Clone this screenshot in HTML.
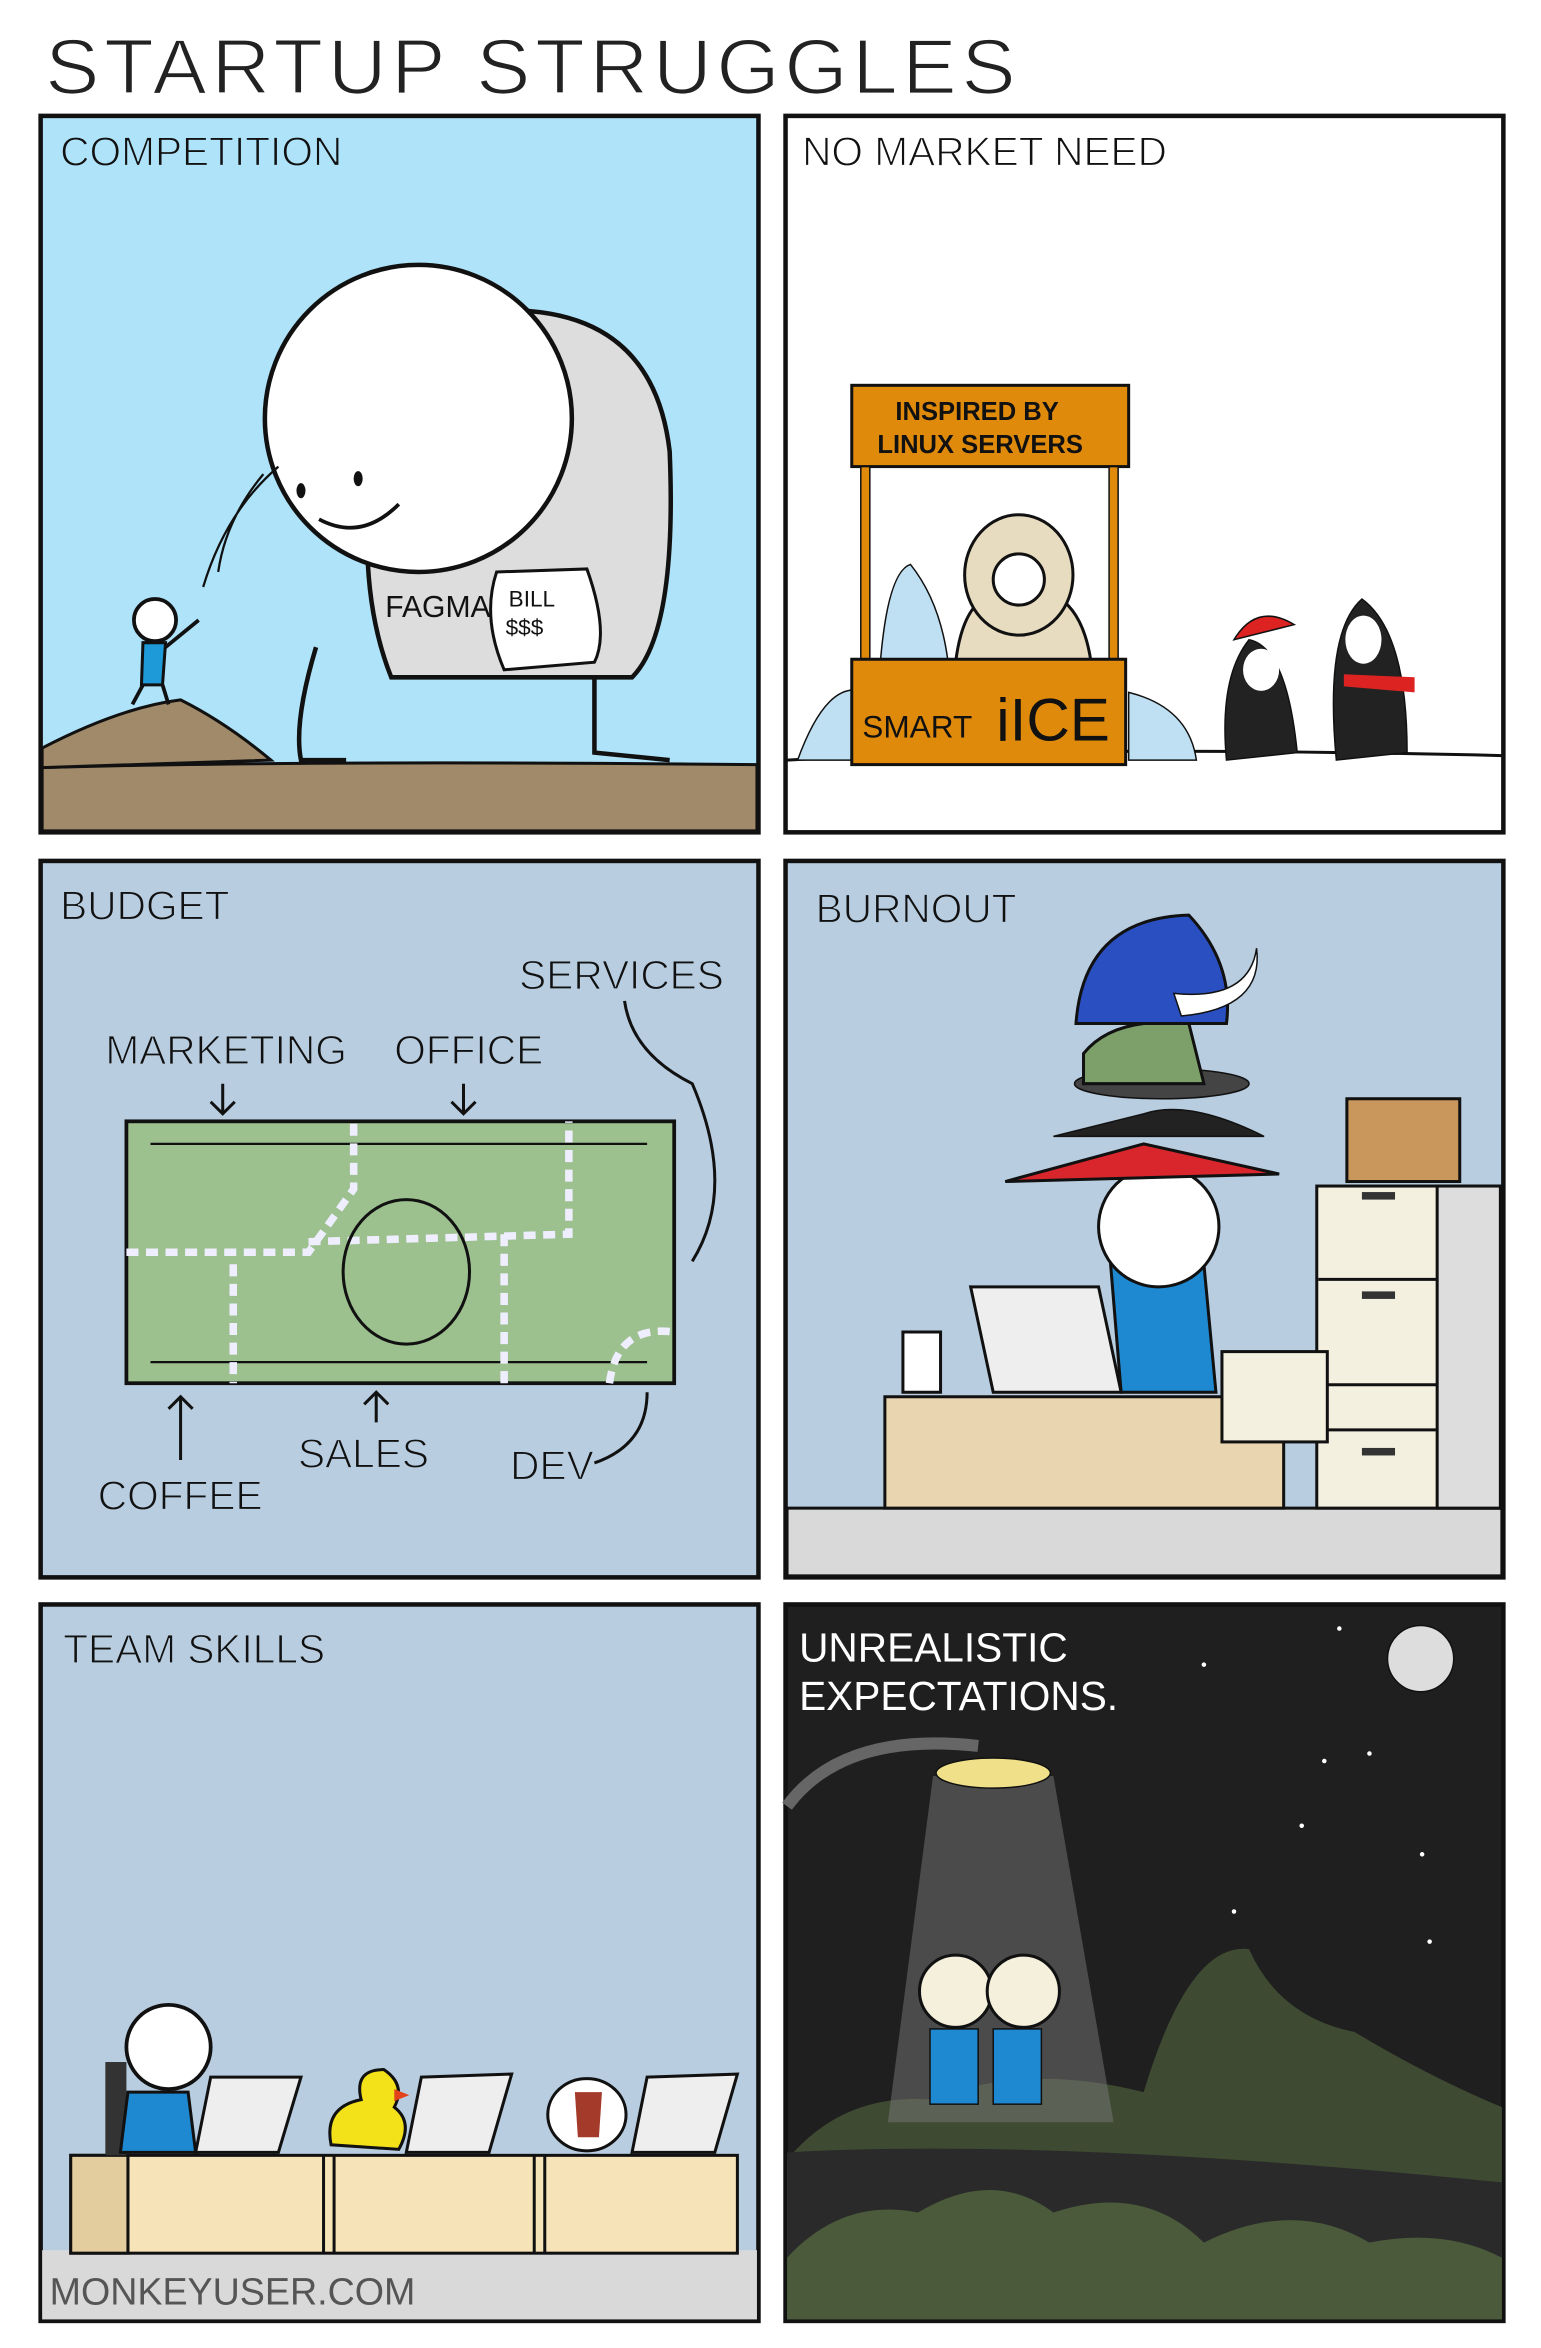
<!DOCTYPE html>
<html><head><meta charset="utf-8"><style>
html,body{margin:0;padding:0;background:#fff}
svg{display:block}
text{font-family:"Liberation Sans",sans-serif;}
</style></head><body>
<svg width="1541" height="2348" viewBox="0 0 1024 1560" preserveAspectRatio="none" xmlns="http://www.w3.org/2000/svg">
<rect width="1024" height="1560" fill="#fff"/>
<text x="30" y="62" font-size="52" fill="#222" letter-spacing="3" textLength="648" lengthAdjust="spacingAndGlyphs" stroke="#fff" stroke-width="1.2">STARTUP STRUGGLES</text>

<!-- Panel 1 -->
<rect x="27" y="77" width="477" height="476" fill="#aee3f9" stroke="#111" stroke-width="3"/>
<path d="M28 510 Q200 505 503 508 L503 552 L28 552Z" fill="#a08a6a" stroke="#111" stroke-width="2"/>
<path d="M28 497 Q80 470 120 465 Q150 480 180 505 L28 510Z" fill="#a08a6a" stroke="#111" stroke-width="2"/>
<path d="M250 220 Q430 170 445 300 Q450 420 420 450 L260 450 Q240 400 245 330Z" fill="#ddd" stroke="#111" stroke-width="3"/>
<circle cx="278" cy="278" r="102" fill="#fff" stroke="#111" stroke-width="3"/>
<ellipse cx="200" cy="326" rx="3" ry="5" fill="#111"/><ellipse cx="238" cy="318" rx="3" ry="5" fill="#111"/>
<path d="M212 345 Q240 360 265 335" fill="none" stroke="#111" stroke-width="2.5"/>
<path d="M185 310 Q150 340 135 390 M175 315 Q150 345 145 380" fill="none" stroke="#111" stroke-width="1.5"/>
<path d="M210 430 Q195 480 200 505 L230 505 M395 450 L395 500 L445 505" fill="none" stroke="#111" stroke-width="3"/>
<text x="256" y="410" font-size="20" fill="#111">FAGMA</text>
<path d="M330 380 L390 378 Q405 420 395 440 L335 445 Q320 410 330 380Z" fill="#fff" stroke="#111" stroke-width="2"/>
<text x="338" y="403" font-size="15" fill="#111">BILL</text><text x="336" y="422" font-size="15" fill="#111">$$$</text>
<circle cx="103" cy="412" r="14" fill="#fff" stroke="#111" stroke-width="2.5"/>
<path d="M95 427 L110 427 L108 455 L94 455Z" fill="#1e9ad9" stroke="#111" stroke-width="2"/>
<path d="M110 430 L132 412 M95 455 L88 468 M108 455 L112 468" stroke="#111" stroke-width="2.5" fill="none"/>
<text x="40" y="110" font-size="27" fill="#111" stroke="#aee3f9" stroke-width="0.8">COMPETITION</text>

<!-- Panel 2 -->
<rect x="522" y="77" width="477" height="476" fill="#fff" stroke="#111" stroke-width="3"/>
<path d="M523 505 Q700 495 998 502" fill="none" stroke="#111" stroke-width="2"/>
<rect x="566" y="256" width="184" height="54" fill="#e08a0c" stroke="#111" stroke-width="2"/>
<text x="595" y="279" font-size="17" font-weight="bold" fill="#111">INSPIRED BY</text>
<text x="583" y="301" font-size="17" font-weight="bold" fill="#111">LINUX SERVERS</text>
<rect x="572" y="310" width="6" height="130" fill="#e08a0c" stroke="#111"/>
<rect x="737" y="310" width="6" height="130" fill="#e08a0c" stroke="#111"/>
<path d="M635 440 Q640 400 660 395 L700 395 Q720 405 725 440Z" fill="#e8dcc0" stroke="#111" stroke-width="2"/>
<ellipse cx="677" cy="382" rx="36" ry="40" fill="#e8dcc0" stroke="#111" stroke-width="2"/>
<circle cx="677" cy="385" r="17" fill="#fff" stroke="#111" stroke-width="2"/>
<path d="M585 440 Q590 380 605 375 Q625 400 630 440Z M530 505 Q550 450 575 460 L575 505Z M750 460 Q790 470 795 505 L750 505Z" fill="#bfe0f2" stroke="#111"/>
<rect x="566" y="438" width="182" height="70" fill="#e08a0c" stroke="#111" stroke-width="2"/>
<text x="573" y="490" font-size="21" fill="#111">SMART</text><text x="662" y="492" font-size="40" fill="#111">iICE</text>
<path d="M815 505 Q810 450 830 425 Q855 430 862 500Z" fill="#222" stroke="#111"/>
<ellipse cx="838" cy="445" rx="12" ry="14" fill="#fff"/>
<path d="M888 505 Q880 420 905 398 Q935 420 935 500Z" fill="#222" stroke="#111"/>
<ellipse cx="906" cy="425" rx="12" ry="16" fill="#fff"/>
<path d="M820 425 Q835 400 860 415 Z" fill="#d22" stroke="#111"/>
<path d="M893 448 L940 450 L940 460 L893 456Z" fill="#d22"/>
<text x="533" y="110" font-size="27" fill="#111" stroke="#fff" stroke-width="0.8">NO MARKET NEED</text>

<!-- Panel 3 Budget -->
<rect x="27" y="572" width="477" height="476" fill="#b8cde0" stroke="#111" stroke-width="3"/>
<rect x="84" y="745" width="364" height="174" fill="#9cc08e" stroke="#111" stroke-width="2.5"/>
<path d="M100 760 L430 760 M100 905 L430 905" stroke="#111" stroke-width="1.5"/>
<path d="M84 832 L205 832 L235 790 L235 745 M205 825 L378 820 L378 745 M155 840 L155 919 M335 820 L335 919 M405 919 Q410 880 448 885" fill="none" stroke="#eef" stroke-width="5" stroke-dasharray="8 5"/>
<ellipse cx="270" cy="845" rx="42" ry="48" fill="none" stroke="#111" stroke-width="2"/>
<g fill="#111" stroke="#b8cde0" stroke-width="0.8" font-size="27">
<text x="40" y="611">BUDGET</text>
<text x="345" y="657">SERVICES</text>
<text x="70" y="707">MARKETING</text>
<text x="262" y="707">OFFICE</text>
<text x="198" y="975">SALES</text>
<text x="339" y="983">DEV</text>
<text x="65" y="1003">COFFEE</text></g>
<path d="M148 720 V740 M140 732 L148 740 L156 732 M308 720 V740 M300 732 L308 740 L316 732 M120 970 V928 M112 936 L120 928 L128 936 M250 945 V925 M242 933 L250 925 L258 933 M415 665 Q420 700 460 720 Q490 790 460 838 M395 972 Q430 960 430 925" fill="none" stroke="#111" stroke-width="2"/>

<!-- Panel 4 Burnout -->
<rect x="522" y="572" width="477" height="476" fill="#b8cde0" stroke="#111" stroke-width="3"/>
<rect x="523" y="1002" width="475" height="45" fill="#d9d9d9" stroke="#111" stroke-width="2"/>
<rect x="588" y="928" width="265" height="74" fill="#e9d5b0" stroke="#111" stroke-width="2"/>
<rect x="875" y="788" width="122" height="214" fill="#f3f0e0" stroke="#111" stroke-width="2"/>
<rect x="955" y="788" width="42" height="214" fill="#ddd" stroke="#111" stroke-width="2"/>
<path d="M876 850 H955 M876 920 H955 M876 950 H955" stroke="#111" stroke-width="2"/>
<rect x="905" y="792" width="22" height="5" fill="#333"/><rect x="905" y="858" width="22" height="5" fill="#333"/><rect x="905" y="962" width="22" height="5" fill="#333"/>
<rect x="812" y="898" width="70" height="60" fill="#f3f0e0" stroke="#111" stroke-width="2"/>
<rect x="895" y="730" width="75" height="55" fill="#c9965c" stroke="#111" stroke-width="2"/>
<path d="M600 885 L625 885 L625 925 L600 925Z" fill="#fff" stroke="#111" stroke-width="2"/>
<path d="M645 855 L730 855 L745 925 L660 925Z" fill="#eee" stroke="#111" stroke-width="2"/>
<path d="M738 840 L800 840 L808 925 L745 925Z" fill="#1e88d0" stroke="#111" stroke-width="2"/>
<circle cx="770" cy="815" r="40" fill="#fff" stroke="#111" stroke-width="2"/>
<path d="M668 785 L760 760 L850 780Z" fill="#d8262c" stroke="#111" stroke-width="2"/>
<path d="M700 755 L840 755 Q790 730 760 740Z" fill="#222" stroke="#111"/>
<ellipse cx="772" cy="720" rx="58" ry="10" fill="#444" stroke="#111"/>
<path d="M720 700 Q740 675 790 680 L800 720 L720 720Z" fill="#7da06a" stroke="#111" stroke-width="2"/>
<path d="M715 680 Q720 610 790 608 Q820 640 815 680Z" fill="#2a4fc0" stroke="#111" stroke-width="2"/>
<path d="M780 660 Q830 665 835 630 Q840 670 785 675Z" fill="#fff" stroke="#111"/>
<text x="542" y="613" font-size="27" fill="#111" stroke="#b8cde0" stroke-width="0.8">BURNOUT</text>

<!-- Panel 5 Team -->
<rect x="27" y="1066" width="477" height="476" fill="#b8cde0" stroke="#111" stroke-width="3"/>
<rect x="28" y="1495" width="475" height="46" fill="#d9d9d9"/>
<rect x="47" y="1432" width="443" height="65" fill="#f6e3b8" stroke="#111" stroke-width="2"/>
<path d="M85 1432 V1497 M215 1432 V1497 M222 1432 V1497 M355 1432 V1497 M362 1432 V1497" stroke="#111" stroke-width="2"/>
<rect x="47" y="1432" width="38" height="65" fill="#e3cc9e" stroke="#111" stroke-width="2"/>
<rect x="70" y="1370" width="14" height="62" fill="#333"/>
<circle cx="112" cy="1360" r="28" fill="#fff" stroke="#111" stroke-width="2.5"/>
<path d="M85 1390 L125 1390 L130 1430 L80 1430Z" fill="#1e88d0" stroke="#111" stroke-width="2"/>
<path d="M140 1380 L200 1380 L185 1430 L130 1430Z" fill="#eee" stroke="#111" stroke-width="2"/>
<path d="M280 1380 L340 1378 L325 1430 L270 1430Z" fill="#eee" stroke="#111" stroke-width="2"/>
<path d="M430 1380 L490 1378 L475 1430 L420 1430Z" fill="#eee" stroke="#111" stroke-width="2"/>
<path d="M220 1425 Q215 1400 240 1395 Q235 1375 255 1375 Q270 1385 262 1400 Q275 1410 265 1428Z" fill="#f3e21a" stroke="#111" stroke-width="2"/>
<path d="M262 1388 L272 1392 L262 1396Z" fill="#e2431a"/>
<ellipse cx="390" cy="1405" rx="26" ry="24" fill="#fff" stroke="#111" stroke-width="2"/>
<path d="M382 1390 L400 1390 L398 1420 L384 1420Z" fill="#a43a2a"/>
<text x="42" y="1105" font-size="27" fill="#111" stroke="#b8cde0" stroke-width="0.8">TEAM SKILLS</text>
<text x="33" y="1531" font-size="25" fill="#555">MONKEYUSER.COM</text>

<!-- Panel 6 Night -->
<rect x="522" y="1066" width="477" height="476" fill="#1f1f1f" stroke="#111" stroke-width="3"/>
<path d="M523 1435 Q560 1390 620 1395 Q680 1370 760 1390 Q790 1290 830 1295 Q850 1340 900 1350 Q950 1380 998 1400 L998 1541 L523 1541Z" fill="#3e4a32"/>
<path d="M523 1430 Q700 1420 998 1450 L998 1541 L523 1541Z" fill="#2a2a2a"/>
<path d="M523 1500 Q560 1460 610 1470 Q660 1440 700 1470 Q760 1450 800 1490 Q860 1460 910 1490 Q960 1480 998 1500 L998 1541 L523 1541Z" fill="#4a5a3a"/>
<path d="M620 1180 L700 1180 L740 1410 L590 1410Z" fill="#777" opacity="0.5"/>
<path d="M523 1200 Q560 1150 650 1160" fill="none" stroke="#666" stroke-width="8"/>
<ellipse cx="660" cy="1178" rx="38" ry="10" fill="#f0e08a" stroke="#111"/>
<circle cx="635" cy="1323" r="24" fill="#f4f0dc" stroke="#111" stroke-width="2"/>
<circle cx="680" cy="1323" r="24" fill="#f4f0dc" stroke="#111" stroke-width="2"/>
<rect x="618" y="1348" width="32" height="50" fill="#1e88d0" stroke="#111"/>
<rect x="660" y="1348" width="32" height="50" fill="#1e88d0" stroke="#111"/>
<circle cx="944" cy="1102" r="22" fill="#ddd" stroke="#111"/>
<text x="531" y="1104" font-size="27" fill="#fff">UNREALISTIC</text>
<text x="531" y="1136" font-size="27" fill="#fff">EXPECTATIONS.</text>
<g fill="#fff"><circle cx="800" cy="1106" r="1.5"/><circle cx="890" cy="1082" r="1.5"/><circle cx="880" cy="1170" r="1.5"/><circle cx="910" cy="1165" r="1.5"/><circle cx="865" cy="1213" r="1.5"/><circle cx="945" cy="1232" r="1.5"/><circle cx="820" cy="1270" r="1.5"/><circle cx="950" cy="1290" r="1.5"/></g>
</svg>
</body></html>
